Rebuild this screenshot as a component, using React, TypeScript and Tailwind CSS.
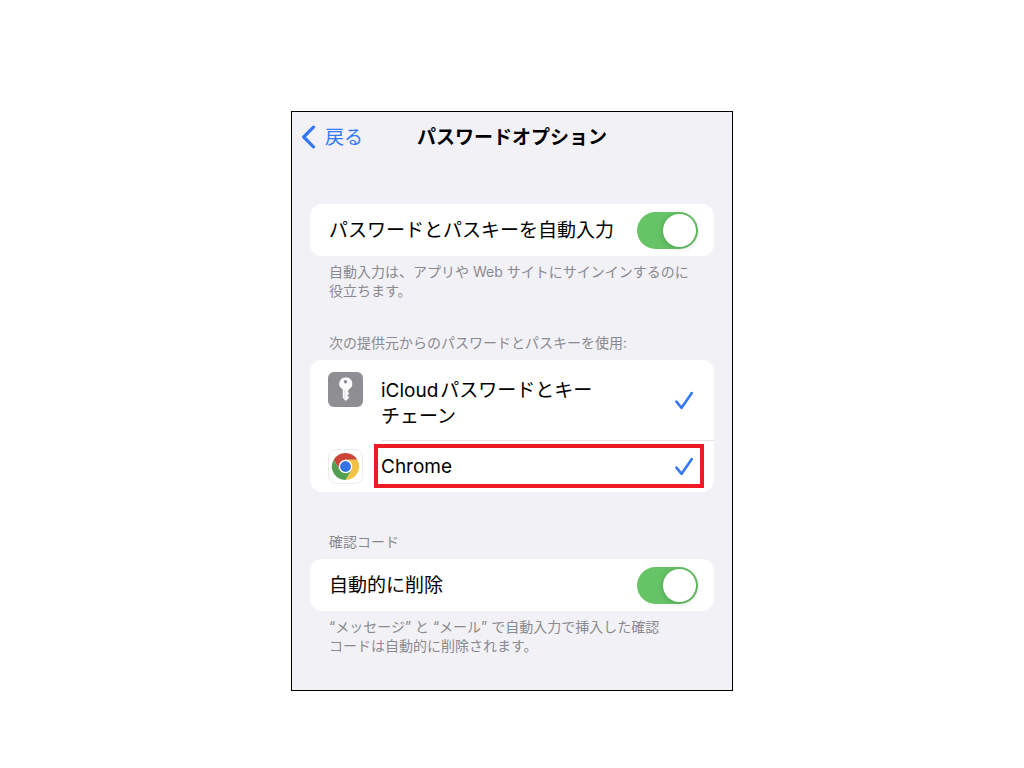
import React, { useState } from 'react';

interface ToggleRowProps {
  id: string;
  label: string;
}

function ToggleRow({ id, label }: ToggleRowProps) {
  const [on, setOn] = useState(true);

  return (
    <div className="flex h-[52px] items-center justify-between rounded-xl bg-white pl-[19px] pr-4">
      <label htmlFor={id} className="pt-[2px] text-[19px] leading-[26px] text-black">
        {label}
      </label>
      <input
        id={id}
        type="checkbox"
        role="switch"
        checked={on}
        onChange={() => setOn(!on)}
        className="flex h-[37px] w-[61px] shrink-0 cursor-pointer appearance-none items-center rounded-full bg-gray-200 px-[2px] before:size-[33px] before:rounded-full before:bg-white before:shadow-[0_1px_6px_rgba(0,0,0,0.2)] before:content-[''] checked:justify-end checked:bg-[#65c466]"
      />
    </div>
  );
}

function KeyIcon() {
  return (
    <svg viewBox="0 0 35 35" className="size-[35px] shrink-0" aria-hidden="true">
      <rect width="35" height="35" rx="6" fill="#8e8e93" />
      <path
        fillRule="evenodd"
        fill="#fff"
        d="M17.5 5.5a6.2 6.2 0 0 0-2.7 11.8v8.4l2.9 3.3 3.6-3.5-2-2 2-2.1-1.7-1.9 1.1-1.3v-.9a6.2 6.2 0 0 0-3.2-11.8Zm0 2.4a1.8 1.8 0 1 1 0 3.6 1.8 1.8 0 0 1 0-3.6Z"
      />
      <path d="M17 18v8.5" stroke="#c4c4c8" strokeWidth="0.7" />
    </svg>
  );
}

function ChromeIcon() {
  return (
    <svg viewBox="0 0 35 35" className="size-[35px] shrink-0" aria-hidden="true">
      <rect x="0.5" y="0.5" width="34" height="34" rx="7.5" fill="#fff" stroke="#ececee" />
      <g transform="translate(17.5 17.5)">
        <circle r="13.6" fill="#fff" />
        <path d="M-11.78 -6.8A13.6 13.6 0 0 1 11.78 -6.8H0L-5.89 3.4Z" fill="#cb4437" />
        <path d="M11.78 -6.8A13.6 13.6 0 0 1 0 13.6L5.89 3.4L0 -6.8Z" fill="#f3c244" />
        <path d="M0 13.6A13.6 13.6 0 0 1 -11.78 -6.8L-5.89 3.4H5.89Z" fill="#53a051" />
        <circle r="6.8" fill="#fff" />
        <circle r="5.4" fill="#3672e4" />
      </g>
    </svg>
  );
}

interface ProviderRowProps {
  icon: React.ReactNode;
  children: React.ReactNode;
  className: string;
  highlighted?: boolean;
}

function ProviderRow({ icon, children, className, highlighted }: ProviderRowProps) {
  return (
    <label className="relative flex cursor-pointer pl-[18px]">
      <input type="checkbox" defaultChecked className="peer sr-only" />
      <span className={`flex shrink-0 ${highlighted ? 'items-center' : 'items-start pt-3'}`}>{icon}</span>
      <span className={`ml-[18px] flex grow items-center pr-5 text-[19px] leading-[26px] text-black ${className}`}>
        <span className="grow">{children}</span>
      </span>
      <svg
        viewBox="0 0 20 20"
        className="invisible absolute right-5 top-1/2 size-5 -translate-y-1/2 peer-checked:visible"
        fill="none"
        stroke="#3478f6"
        strokeWidth="2.6"
        strokeLinecap="round"
        strokeLinejoin="round"
        aria-hidden="true"
      >
        <path d="M2.4 10.6 7.6 16.8 17.8 2" />
      </svg>
      {highlighted && (
        <span className="pointer-events-none absolute bottom-1 left-16 right-[10px] top-[3px] border-4 border-[#ed1c24]" />
      )}
    </label>
  );
}

export default function App() {
  return (
    <div className="min-h-screen bg-white px-4 pt-[111px] font-['Inter','Noto_Sans_CJK_JP',sans-serif]" lang="ja">
      <main className="mx-auto w-full max-w-[442px] border border-black bg-[#f2f1f6] px-[18px] pb-[35px]">
        <header className="-mx-[9px] grid h-[50px] grid-cols-[1fr_auto_1fr] items-center">
          <a href="#back" className="flex items-center gap-[9px] text-[19px] leading-[26px] text-[#3478f6]">
            <svg
              viewBox="0 0 15 24"
              className="h-6 w-[15px]"
              fill="none"
              stroke="currentColor"
              strokeWidth="3.2"
              strokeLinecap="round"
              strokeLinejoin="round"
              aria-hidden="true"
            >
              <path d="M12.5 2.2 2.7 12l9.8 9.8" />
            </svg>
            <span className="pt-[2px]">戻る</span>
          </a>
          <h1 className="pt-[2px] text-[19px] font-bold leading-[26px] text-black">パスワードオプション</h1>
        </header>

        <section className="mt-[42px]">
          <ToggleRow id="autofill" label="パスワードとパスキーを自動入力" />
          <p className="mt-[6px] px-[19px] text-sm leading-[19px] text-[#8a8a8e]">
            自動入力は、アプリや<span className="mx-1">Web</span>サイトにサインインするのに
            <br />
            役立ちます。
          </p>
        </section>

        <section className="mt-[33px]">
          <h2 className="mb-2 px-[19px] text-sm leading-[19px] text-[#8a8a8e]">
            次の提供元からのパスワードとパスキーを使用:
          </h2>
          <div className="overflow-hidden rounded-xl bg-white">
            <ProviderRow icon={<KeyIcon />} className="border-b border-[#e4e4e6] pb-[10px] pt-[18px]">
              <span className="mr-[2px]">iCloud</span>パスワードとキー
              <br />
              チェーン
            </ProviderRow>
            <ProviderRow icon={<ChromeIcon />} className="h-[51px]" highlighted>
              Chrome
            </ProviderRow>
          </div>
        </section>

        <section className="mt-10">
          <h2 className="mb-2 px-[19px] text-sm leading-[19px] text-[#8a8a8e]">確認コード</h2>
          <ToggleRow id="auto-delete" label="自動的に削除" />
          <p className="mt-[6px] px-[19px] text-sm leading-[19px] text-[#8a8a8e]">
            “メッセージ” と “メール” で自動入力で挿入した確認
            <br />
            コードは自動的に削除されます。
          </p>
        </section>
      </main>
    </div>
  );
}
